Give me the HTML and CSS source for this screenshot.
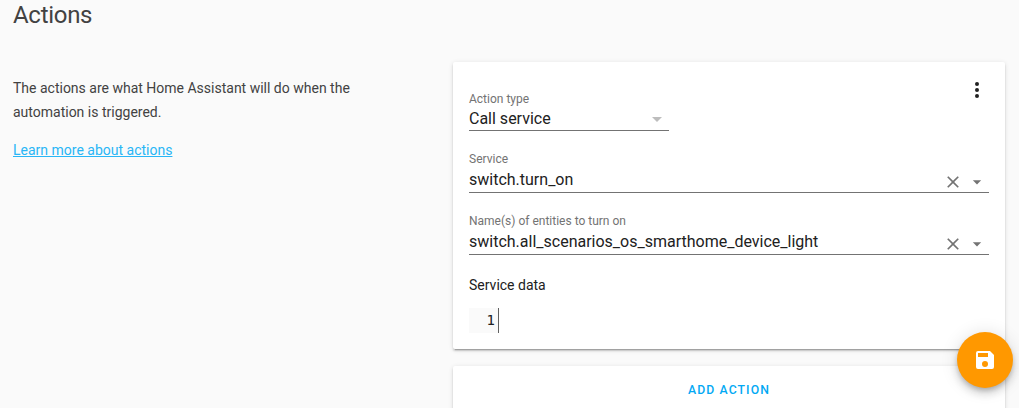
FILE: index.html
```html
<!DOCTYPE html>
<html lang="en">
<head>
<meta charset="utf-8">
<title>Actions</title>
<link rel="stylesheet" href="styles.css">
</head>
<body>
<main class="section">
  <div class="intro">
    <h1 class="title">Actions</h1>
    <p class="description">The actions are what Home Assistant will do when the automation is triggered.</p>
    <a class="link" href="#">Learn more about actions</a>
  </div>
  <div class="content">
    <section class="card action">
      <div class="top">
        <div class="field type">
          <label class="label">Action type</label>
          <div class="row"><span class="value">Call service</span>
            <svg class="icon light" viewBox="0 0 24 24"><path d="M7 10l5 5 5-5z"/></svg></div>
        </div>
        <svg class="icon menu" viewBox="0 0 24 24"><path d="M12 16a2 2 0 1 1 0 4 2 2 0 0 1 0-4m0-6a2 2 0 1 1 0 4 2 2 0 0 1 0-4m0-6a2 2 0 1 1 0 4 2 2 0 0 1 0-4z"/></svg>
      </div>
      <div class="field combo">
        <label class="label">Service</label>
        <div class="row"><span class="value">switch.turn_on</span>
          <svg class="icon small" viewBox="0 0 24 24"><path d="M19 6.41 17.59 5 12 10.59 6.41 5 5 6.41 10.59 12 5 17.59 6.41 19 12 13.41 17.59 19 19 17.59 13.41 12z"/></svg>
          <svg class="icon small" viewBox="0 0 24 24"><path d="M7 10l5 5 5-5z"/></svg></div>
      </div>
      <div class="field combo">
        <label class="label">Name(s) of entities to turn on</label>
        <div class="row"><span class="value">switch.all_scenarios_os_smarthome_device_light</span>
          <svg class="icon small" viewBox="0 0 24 24"><path d="M19 6.41 17.59 5 12 10.59 6.41 5 5 6.41 10.59 12 5 17.59 6.41 19 12 13.41 17.59 19 19 17.59 13.41 12z"/></svg>
          <svg class="icon small" viewBox="0 0 24 24"><path d="M7 10l5 5 5-5z"/></svg></div>
      </div>
      <p class="data-label">Service data</p>
      <div class="editor"><div class="gutter">1</div></div>
    </section>
    <section class="card add"><button class="add-button">Add action</button></section>
  </div>
</main>
<button class="fab" aria-label="Save">
  <svg class="icon" viewBox="0 0 24 24"><path d="M15 9H5V5h10m-3 14a3 3 0 0 1-3-3 3 3 0 0 1 3-3 3 3 0 0 1 3 3 3 3 0 0 1-3 3m5-16H5a2 2 0 0 0-2 2v14a2 2 0 0 0 2 2h14a2 2 0 0 0 2-2V7l-4-4z"/></svg>
</button>
</body>
</html>
```
FILE: styles.css
```css
* { box-sizing: border-box; }
body {
  margin: 0;
  height: 408px;
  overflow: hidden;
  background: #fafafa;
  color: #212121;
  font: 14px/24px Roboto, sans-serif;
}
.section { display: grid; grid-template-columns: 400px 552px; column-gap: 40px; padding-left: 13px; }
.title { margin: 0 0 45px; font-size: 24px; line-height: 31px; font-weight: 400; letter-spacing: -0.012em; color: #424242; }
.description { margin: 0 0 14px; width: 350px; color: #424242; }
.link { display: block; color: #29b6f6; }
.content { display: flex; flex-direction: column; gap: 17px; padding-top: 62px; }
.card {
  background: #fff;
  border-radius: 2px;
  box-shadow: 0 2px 2px 0 rgba(0,0,0,.14), 0 1px 5px 0 rgba(0,0,0,.12), 0 3px 1px -2px rgba(0,0,0,.2);
}
.action { height: 287px; padding: 16px; }
.top { display: flex; justify-content: space-between; height: 71px; }
.icon { display: block; flex: none; width: 24px; height: 24px; fill: currentColor; }
.field { display: flex; flex-direction: column; }
.type { width: 200px; height: 53px; padding-top: 11px; border-bottom: 1px solid #737373; }
.label { font-size: 12px; line-height: 20px; color: #737373; }
.row { display: flex; align-items: center; height: 24px; }
.value { flex: 1; font-size: 16px; line-height: 24px; }
.type .row { height: 19px; }
.light { color: #bdbdbd; }
.combo { height: 44px; margin-bottom: 18px; border-bottom: 1px solid #737373; }
.combo .row { height: 22px; }
.combo .icon { margin: 3px 2px 0; color: #737373; }
.combo .small { width: 20px; height: 20px; }
.data-label { margin: 0 0 11px; }
.editor { display: flex; height: 25px; }
.gutter {
  width: 30px;
  padding-right: 3px;
  background: #fafafa;
  border-right: 1px solid #616161;
  font: 14px/25px "DejaVu Sans Mono", monospace;
  text-align: right;
}
.add { height: 60px; }
.add-button {
  display: block;
  width: 100%;
  height: 48px;
  padding: 0;
  border: 0;
  background: none;
  color: #03a9f4;
  font: 500 12.25px/48px Roboto, sans-serif;
  letter-spacing: 1.09px;
  text-transform: uppercase;
}
.fab {
  position: fixed;
  right: 6px;
  bottom: 20px;
  display: grid;
  place-items: center;
  width: 56px;
  height: 56px;
  padding: 0;
  border: 0;
  border-radius: 50%;
  background: #ff9800;
  color: #fff;
  box-shadow: 0 3px 5px -1px rgba(0,0,0,.2), 0 6px 10px 0 rgba(0,0,0,.14), 0 1px 18px 0 rgba(0,0,0,.12);
}
```
